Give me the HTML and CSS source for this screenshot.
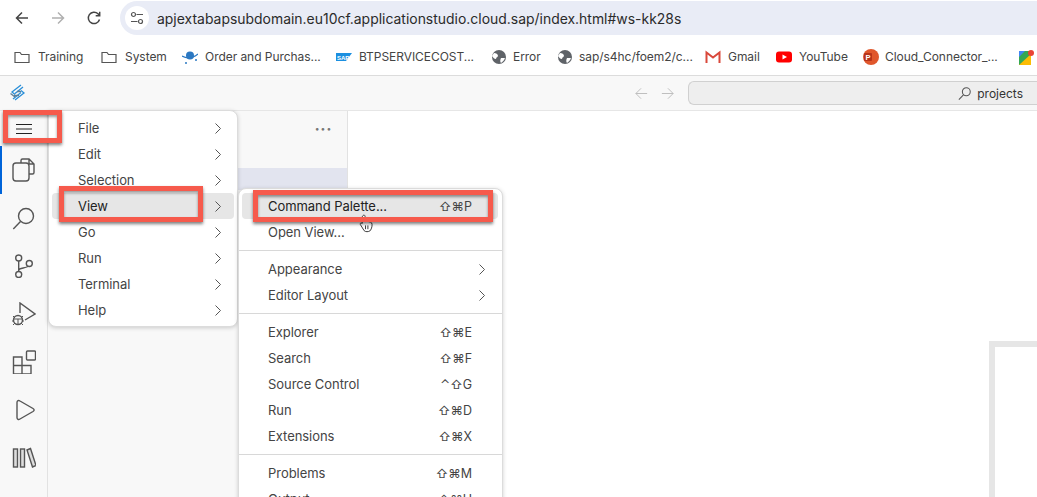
FILE: index.html
```html
<!DOCTYPE html>
<html lang="en">
<head>
<meta charset="utf-8">
<title>Command Palette</title>
<link rel="stylesheet" href="styles.css">
</head>
<body>
<div class="toolbar">
  <svg class="nav" viewBox="0 0 16 16"><path d="M14 8H2.500M8 2.500 2.500 8 8 13.500" class="s-dark"/></svg>
  <svg class="nav" viewBox="0 0 16 16"><path d="M2 8h11.500M8 2.500 13.500 8 8 13.500" class="s-light"/></svg>
  <svg class="nav" viewBox="0 0 16 16"><path d="M13.500 9.500A5.700 5.700 0 1 1 12 3.800L13.500 5.500M13.700 1.800v4h-4" class="s-dark"/></svg>
  <div class="omnibox">
    <span class="tune"><svg viewBox="0 0 14 14" width="14" height="14"><circle cx="3.500" cy="3.500" r="2" class="s-thin"/><path d="M6.500 3.500H13M1 10.500h6.500" class="s-thin"/><circle cx="10.500" cy="10.500" r="2" class="s-thin"/></svg></span>
    <span class="url">apjextabapsubdomain.eu10cf.applicationstudio.cloud.sap/index.html#ws-kk28s</span>
  </div>
</div>
<div class="bookmarks">
  <div class="bm bm-folder"><svg class="bi" viewBox="0 0 16 16"><path d="M1 3.500h5l1.500 2H15v8H1z" class="s-thin"/></svg>Training</div>
  <div class="bm bm-folder2"><svg class="bi" viewBox="0 0 16 16"><path d="M1 3.500h5l1.500 2H15v8H1z" class="s-thin"/></svg>System</div>
  <div class="bm bm-order"><svg class="bi" viewBox="0 0 16 16"><circle cx="8" cy="6.500" r="4" fill="#2b78c2"/><path d="M0 7c5 3 11 2 16-2" class="s-blue"/><circle cx="4" cy="14" r="1" fill="#2b78c2"/><circle cx="14" cy="11" r="1" fill="#2b78c2"/></svg>Order and Purchas...</div>
  <div class="bm bm-btp"><svg class="bi" viewBox="0 0 16 16"><path d="M0 4h16l-6 8H0z" fill="#1b8fe0"/><text x="1" y="10.500" class="sap-t">SAP</text></svg>BTPSERVICECOST...</div>
  <div class="bm bm-err"><svg class="bi" viewBox="0 0 16 16"><circle cx="8" cy="8" r="7" fill="#5f6368"/><path d="M3 4c2 0 4 1 4 3 0 1-2 1-2 3-2 0-3-2-4-3zM10 9h4c-1 3-3 4-4 5-1-1-1-3 0-5z" fill="#fff"/></svg>Error</div>
  <div class="bm bm-s4"><svg class="bi" viewBox="0 0 16 16"><circle cx="8" cy="8" r="7" fill="#5f6368"/><path d="M3 4c2 0 4 1 4 3 0 1-2 1-2 3-2 0-3-2-4-3zM10 9h4c-1 3-3 4-4 5-1-1-1-3 0-5z" fill="#fff"/></svg>sap/s4hc/foem2/c...</div>
  <div class="bm bm-gmail"><svg class="bi" viewBox="0 0 16 16"><path d="M1.500 14V3.500L8 8.500l6.500-5V14" class="s-gmail"/></svg>Gmail</div>
  <div class="bm bm-yt"><svg class="bi" viewBox="0 0 16 16"><rect y="2.500" width="16" height="11" rx="3" fill="#f00"/><path d="M6.500 5.500 11 8l-4.500 2.500z" fill="#fff"/></svg>YouTube</div>
  <div class="bm bm-ppt"><svg class="bi" viewBox="0 0 16 16"><circle cx="8" cy="8" r="8" fill="#e0572c"/><rect x="1" y="4" width="8" height="8" rx="1" fill="#b7341a"/><text x="2.500" y="10.800" class="ppt-t">P</text></svg>Cloud_Connector_...</div>
  <div class="bm bm-maps"><svg class="bi" viewBox="0 0 16 16"><path d="M0 2h12v14H0z" fill="#34a853"/><path d="M0 16 12 5v11z" fill="#fbbc04"/><path d="M0 2h6L0 8z" fill="#4285f4"/><circle cx="12" cy="4" r="3" fill="#ea4335"/></svg></div>
</div>
<div class="ide">
  <div class="titlebar">
    <svg class="logo" viewBox="0 0 18 18"><path d="M12 1 3 8l3 2.500M14 3 6 9.500" class="s-logo"/><path d="M6 16l9-7-3-2.500M4 15l8-6.500" class="s-logo"/><path d="M1.500 9.500 6 13M5 11.500h5M8 7.500h4" class="s-logo2"/></svg>
    <div class="title-right">
      <svg class="tnav" viewBox="0 0 16 16"><path d="M14 8H2M7.500 2.500 2 8l5.500 5.500" class="s-faint"/></svg>
      <svg class="tnav" viewBox="0 0 16 16"><path d="M2 8h12M8.500 2.500 14 8l-5.500 5.500" class="s-faint"/></svg>
      <div class="search">
        <svg class="glass" viewBox="0 0 16 16"><circle cx="9.500" cy="6" r="4.500" class="s-thin"/><path d="M6.200 9.500 1 15" class="s-thin"/></svg>
        <span>projects</span>
      </div>
    </div>
  </div>
  <div class="workbench">
    <div class="activity">
      <div class="act act-menu"><svg class="burger" viewBox="0 0 16 10"><path d="M0 .500h16M0 5h16M0 9.500h16" class="s-black"/></svg></div>
      <div class="act act-on"><svg viewBox="0 0 24 24"><path d="M9 5V2.500A1.500 1.500 0 0 1 10.500 1H17l5 5v8.500a1.500 1.500 0 0 1-1.500 1.500H17M17 1v5h5" class="s-icon"/><rect x="1" y="5" width="16" height="18" rx="3" class="s-icon"/></svg></div>
      <div class="act"><svg viewBox="0 0 24 24"><circle cx="14" cy="10" r="7.500" class="s-icon"/><path d="M8.500 15.500 1.300 23" class="s-icon"/></svg></div>
      <div class="act"><svg viewBox="0 0 24 24"><circle cx="6.700" cy="4" r="3" class="s-icon"/><circle cx="6.700" cy="20.500" r="3" class="s-icon"/><circle cx="17.300" cy="9.500" r="3" class="s-icon"/><path d="M6.700 7v10.500M6.700 16c.5-2.500 8-1.500 9.500-4" class="s-icon"/></svg></div>
      <div class="act"><svg viewBox="0 0 24 24"><path d="M8 11V1l15 11-10 6" class="s-icon"/><circle cx="6" cy="18" r="4.500" class="s-icon"/><path d="M1 14l2 2M11 14l-2 2M0 19h2M10 19h2M1 23l2-2M11 23l-2-2M2 17h8M6 17v5" class="s-icon-thin"/></svg></div>
      <div class="act"><svg viewBox="0 0 24 24"><path d="M1.500 7h8.500v8.500h9V24H1.500zM1.500 15.500H10V24" class="s-icon"/><rect x="14.500" y="1" width="9" height="9" rx="1" class="s-icon"/></svg></div>
      <div class="act"><svg viewBox="0 0 24 24"><path d="M5 4.500c0-2 1.500-2.500 3-1.500l13 7.500c1.500 1 1.500 2 0 3L8 21c-1.500 1-3 .5-3-1.500z" class="s-icon"/></svg></div>
      <div class="act"><svg viewBox="0 0 24 24"><rect x="1.500" y="3" width="4" height="18" class="s-icon s-book"/><rect x="8.500" y="3" width="4" height="18" class="s-icon s-book"/><path d="M15 4l3.500-1.500L24 19.500 20.500 21z" class="s-icon s-book"/></svg></div>
      <div class="act"><svg viewBox="0 0 24 24"><path d="M8 6h10M10 6v4l-6 11h17l-6-11V6" class="s-icon"/></svg></div>
    </div>
    <div class="sidebar">
      <div class="side-head"><span class="dots">···</span></div>
      <div class="side-sel"></div>
    </div>
    <div class="editor"><div class="watermark"></div></div>
  </div>
</div>

<div class="menu menu-main">
  <div class="mi"><span>File</span><svg class="chev" viewBox="0 0 6 11"><path d="M.5.500 5.500 5.500.5 10.500"/></svg></div>
  <div class="mi"><span>Edit</span><svg class="chev" viewBox="0 0 6 11"><path d="M.5.500 5.500 5.500.5 10.500"/></svg></div>
  <div class="mi"><span>Selection</span><svg class="chev" viewBox="0 0 6 11"><path d="M.5.500 5.500 5.500.5 10.500"/></svg></div>
  <div class="mi mi-on"><span>View</span><svg class="chev" viewBox="0 0 6 11"><path d="M.5.500 5.500 5.500.5 10.500"/></svg></div>
  <div class="mi"><span>Go</span><svg class="chev" viewBox="0 0 6 11"><path d="M.5.500 5.500 5.500.5 10.500"/></svg></div>
  <div class="mi"><span>Run</span><svg class="chev" viewBox="0 0 6 11"><path d="M.5.500 5.500 5.500.5 10.500"/></svg></div>
  <div class="mi"><span>Terminal</span><svg class="chev" viewBox="0 0 6 11"><path d="M.5.500 5.500 5.500.5 10.500"/></svg></div>
  <div class="mi"><span>Help</span><svg class="chev" viewBox="0 0 6 11"><path d="M.5.500 5.500 5.500.5 10.500"/></svg></div>
</div>

<div class="menu menu-sub">
  <div class="mi mi-on"><span>Command Palette...</span><kbd>⇧⌘P</kbd></div>
  <div class="mi"><span>Open View...</span></div>
  <div class="sep"></div>
  <div class="mi"><span>Appearance</span><svg class="chev" viewBox="0 0 6 11"><path d="M.5.500 5.500 5.500.5 10.500"/></svg></div>
  <div class="mi"><span>Editor Layout</span><svg class="chev" viewBox="0 0 6 11"><path d="M.5.500 5.500 5.500.5 10.500"/></svg></div>
  <div class="sep"></div>
  <div class="mi"><span>Explorer</span><kbd>⇧⌘E</kbd></div>
  <div class="mi"><span>Search</span><kbd>⇧⌘F</kbd></div>
  <div class="mi"><span>Source Control</span><kbd>⌃⇧G</kbd></div>
  <div class="mi"><span>Run</span><kbd>⇧⌘D</kbd></div>
  <div class="mi"><span>Extensions</span><kbd>⇧⌘X</kbd></div>
  <div class="sep"></div>
  <div class="mi"><span>Problems</span><kbd>⇧⌘M</kbd></div>
  <div class="mi"><span>Output</span><kbd>⇧⌘U</kbd></div>
</div>

<svg class="cursor" viewBox="0 0 16 20"><path d="M5 1.500c1-1 2 0 2 1V8c2-.5 6 0 7 1.500 1 2 0 6-1.500 8-2 1.500-5 1.500-6.500 0L2 11c-.5-1 .5-2 2-1V3z" fill="#fff" stroke="#333" stroke-width="1"/><path d="M7.500 12v4M10 12v4" stroke="#333" stroke-width="1"/></svg>
<div class="hl hl-burger"></div>
<div class="hl hl-view"></div>
<div class="hl hl-cmd"></div>
</body>
</html>
```
FILE: styles.css
```css
* { box-sizing: border-box; }
html, body { margin: 0; padding: 0; }
body {
  width: 1037px; height: 497px; overflow: hidden; position: relative;
  background: #fff; font-family: "Inter", "Liberation Sans", sans-serif; color: #3a3a3a;
}
svg { display: block; fill: none; }
.s-dark { stroke: #444; stroke-width: 1.500; }
.s-light { stroke: #b0b0b0; stroke-width: 1.500; }
.s-thin { stroke: #555; stroke-width: 1.200; fill: none; }
.s-blue { stroke: #2b78c2; stroke-width: 1.200; }
.s-gmail { stroke: #d9483b; stroke-width: 2; }
.s-logo { stroke: #2a8fd8; stroke-width: 1.300; }
.s-logo2 { stroke: #5f7f96; stroke-width: 1.300; }
.s-faint { stroke: #bbb; stroke-width: 1; }
.s-black { stroke: #222; stroke-width: 1; }
.s-icon { stroke: #555; stroke-width: 1.400; fill: none; }
.s-icon-thin { stroke: #555; stroke-width: 1; }
.s-book { fill: #ddd; }
.sap-t { font: bold 6px "Liberation Sans", sans-serif; fill: #fff; }
.ppt-t { font: bold 7.500px "Liberation Sans", sans-serif; fill: #fff; }

.toolbar { height: 36px; display: flex; align-items: center; padding: 0 0 0 14px; background: #fff; }
.nav { width: 16px; height: 16px; margin-right: 20px; }
.nav:nth-child(3) { margin-right: 18px; }
.omnibox { flex: 1; height: 34px; background: #e9ecf6; border-radius: 17px 0 0 17px; display: flex; align-items: center; padding-left: 5px; }
.tune { width: 24px; height: 24px; background: #fff; border-radius: 50%; display: flex; align-items: center; justify-content: center; margin-right: 8px; }
.url { font-size: 13.950px; color: #2b2b2b; white-space: nowrap; }

.bookmarks { height: 40px; padding-top: 2px; display: flex; align-items: center; background: #fff; border-bottom: 1px solid #dcdcdc; font-size: 12px; letter-spacing: -.05px; color: #444; white-space: nowrap; overflow: hidden; }
.bm { display: flex; align-items: center; gap: 7px; flex: none; }
.bi { width: 16px; height: 16px; flex: none; }
.bm-folder { margin-left: 14px; width: 87px; gap: 8px; }
.bm-folder2 { width: 81px; gap: 8px; }
.bm-order { width: 154px; gap: 7px; }
.bm-btp { width: 155px; }
.bm-err { width: 66px; gap: 6px; }
.bm-s4 { width: 148px; gap: 6px; }
.bm-gmail { width: 71px; }
.bm-yt { width: 87px; }
.bm-ppt { width: 156px; gap: 6px; }
.bm-maps { width: 16px; }

.ide { height: 421px; display: flex; flex-direction: column; background: #f8f8f8; }
.titlebar { height: 35px; flex: none; display: flex; align-items: center; justify-content: space-between; padding-left: 9px; background: #f8f8f8; border-bottom: 1px solid #e6e6e6; }
.logo { width: 18px; height: 18px; }
.title-right { display: flex; align-items: center; width: 403px; }
.tnav { width: 15px; height: 15px; margin-right: 11px; }
.search { flex: 1; height: 24px; background: #eeeeee; border: 1px solid #d0d0d0; border-right: 0; border-radius: 6px 0 0 6px; margin-left: 2px; display: flex; align-items: center; justify-content: flex-end; gap: 5px; padding-right: 14px; font-size: 12px; color: #333; }
.glass { width: 14px; height: 15px; }

.workbench { flex: 1; display: flex; min-height: 0; }
.activity { width: 48px; flex: none; background: #f8f8f8; border-right: 1px solid #e2e2e2; display: flex; flex-direction: column; overflow: hidden; }
.act { height: 48px; display: flex; align-items: center; justify-content: center; flex: none; border-left: 2px solid transparent; padding-right: 2px; }
.act svg { width: 24px; height: 24px; }
.act-menu { height: 35px; }
.act-menu .burger { width: 16px; height: 10px; }
.act-on { border-left-color: #0064d9; }
.sidebar { width: 300px; flex: none; background: #f8f8f8; border-right: 1px solid #e2e2e2; }
.side-head { height: 35px; display: flex; align-items: center; justify-content: flex-end; padding-right: 15px; }
.dots { font-size: 16px; font-weight: 700; color: #777; letter-spacing: .5px; }
.side-sel { height: 22px; margin-top: 22px; background: #e2e4ef; }
.editor { flex: 1; background: #fff; position: relative; overflow: hidden; }
.watermark { position: absolute; left: 641px; top: 230px; width: 100px; height: 300px; border: 6px solid #e6e6e6; border-right: 0; background: #fff; }

.menu { position: absolute; background: #fff; border: 1px solid #dcdcdc; box-shadow: 0 1px 4px rgba(0,0,0,.18); font-size: 13px; letter-spacing: -.05px; color: #444; }
.menu-main { left: 48px; top: 110px; width: 190px; height: 217px; padding: 4px 3px; border-radius: 0 8px 8px 8px; }
.menu-sub { left: 238px; top: 188px; width: 265px; height: 320px; padding: 4px 4px 4px 3px; border-radius: 8px 8px 0 0; }
.mi { height: 26px; display: flex; align-items: center; justify-content: space-between; padding: 0 13px 0 26px; border-radius: 4px; white-space: nowrap; }
.mi-on { background: #e6e6e6; color: #222; }
.chev { width: 6px; height: 11px; stroke: #555; stroke-width: 1; flex: none; }
.sep { height: 1px; background: #d8d8d8; margin: 5px -4px 5px -3px; }
kbd { font: 12.500px "Inter", "DejaVu Sans", sans-serif; color: #444; margin-right: 13px; }

.hl { position: absolute; border: 5px solid #f65a4c; box-shadow: 0 2px 3px rgba(0,0,0,.5), inset 0 2px 3px rgba(0,0,0,.4); }
.hl-burger { left: 3px; top: 110px; width: 59px; height: 33px; }
.hl-view { left: 59px; top: 186px; width: 144px; height: 36px; }
.hl-cmd { left: 253px; top: 190px; width: 240px; height: 32px; }
.cursor { position: absolute; left: 358px; top: 214px; width: 16px; height: 19px; }
```
